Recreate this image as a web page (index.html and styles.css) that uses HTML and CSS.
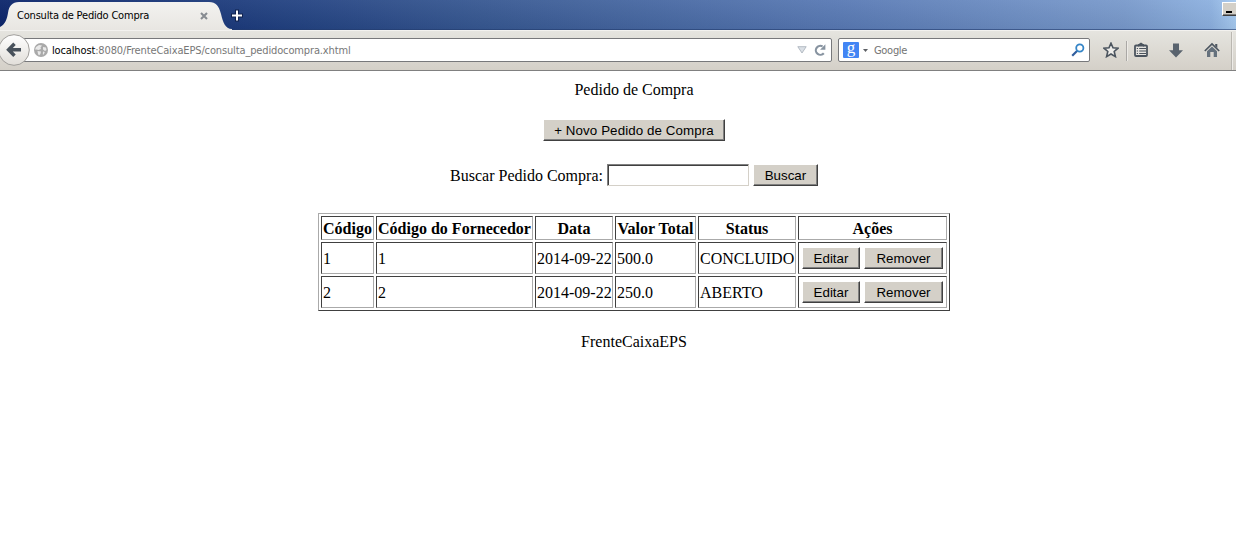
FILE: index.html
```html
<!DOCTYPE html>
<html lang="pt-BR">
<head>
<meta charset="utf-8">
<title>Consulta de Pedido Compra</title>
<link rel="stylesheet" href="styles.css">
</head>
<body>
<header class="browser">
  <div class="tabstrip">
    <div class="tab">
      <svg class="tab-shape" width="232" height="30" viewBox="0 0 232 30"><defs><linearGradient id="tabfill" x1="0" y1="0" x2="0" y2="1"><stop offset="0" stop-color="#f3f2f0"/><stop offset="1" stop-color="#e8e6e2"/></linearGradient></defs><path d="M0 30V27C6 24 7 18 8 13C9 6 12 2 19 2H209C216 2 219 6 221 14C223 22 225 29 232 29V30Z" fill="url(#tabfill)"/></svg>
      <span class="tab-title">Consulta de Pedido Compra</span>
      <svg class="tab-close" width="8" height="8" viewBox="0 0 8 8"><path d="M1 1L7 7M7 1L1 7" stroke="#878b91" stroke-width="2.1"/></svg>
    </div>
    <svg class="new-tab" width="13" height="13" viewBox="0 0 13 13"><path d="M6 .5V12.5M0 6.5H12" stroke="#10224f" stroke-width="4"/><path d="M6 1.5V11.5M1 6.5H11" stroke="#fff" stroke-width="2"/></svg>
    <div class="minimize"></div>
  </div>
  <div class="toolbar">
    <div class="field url">
      <svg class="globe" width="14" height="14" viewBox="0 0 14 14"><circle cx="7" cy="7" r="7" fill="#a9a9a9"/><path d="M2 4L5 2L8 2.5L6.5 4.5L7 6L4.5 7L2.5 6.5L1 6.5ZM9 4L12 4.5L12.5 7L11 8L9 6.5ZM3.5 8L7 8.6L6.4 11L5 12.4L4 11ZM9 8.5L10.8 9L9.8 11.5L8.8 11.5Z" fill="#e9e9e9"/></svg>
      <span class="address"><b>localhost</b>:8080/FrenteCaixaEPS/consulta_pedidocompra.xhtml</span>
      <svg class="drop" width="10" height="8" viewBox="0 0 10 8"><path d="M.8.7H9.2L5 7Z" fill="#dbe0e6" stroke="#aeb5be" stroke-width=".9"/></svg>
      <svg class="reload" width="12" height="12" viewBox="0 0 12 12"><path d="M9.8 9.2A4.5 4.5 0 1 1 8.6 2.4" fill="none" stroke="#8793a0" stroke-width="2.1"/><path d="M11.4.3V5.7H6.1Z" fill="#8793a0"/></svg>
    </div>
    <div class="field search">
      <span class="engine">g</span>
      <svg class="engine-arrow" width="5" height="3" viewBox="0 0 5 3"><path d="M0 0H5L2.5 3Z" fill="#5d6065"/></svg>
      <span class="placeholder">Google</span>
      <svg class="lens" width="14" height="14" viewBox="0 0 14 14"><path d="M6.2 7.8L1.2 12.8" stroke="#315d9d" stroke-width="2.2"/><circle cx="8.8" cy="5" r="3.6" fill="#fff" stroke="#3585c7" stroke-width="1.8"/></svg>
    </div>
    <svg class="back" width="32" height="32" viewBox="0 0 32 32"><defs><linearGradient id="backfill" x1="0" y1="0" x2="0" y2="1"><stop offset="0" stop-color="#fff"/><stop offset="1" stop-color="#e1ded9"/></linearGradient></defs><circle cx="14" cy="16" r="15.3" fill="url(#backfill)" stroke="#a09e9b"/><path d="M14.5 9.8L8.6 15.8L14.5 21.8M9.5 15.8H21" fill="none" stroke="#48515b" stroke-width="3.5"/></svg>
    <svg class="star" width="16" height="16" viewBox="0 0 16 16"><path d="M8 1.2L10 5.8L15 6.2L11.2 9.5L12.4 14.6L8 12L3.6 14.6L4.8 9.5L1 6.2L6 5.8Z" fill="#eeedea" stroke="#4b545e" stroke-width="1.6"/></svg>
    <i class="separator"></i>
    <svg class="clip" width="14" height="16" viewBox="0 0 14 16"><path d="M1 4.3Q1 3.5 2 3.5H4.3L7 1.5L9.7 3.5H12Q13 3.5 13 4.3V13Q13 14 12 14H2Q1 14 1 13Z" fill="#e5e3df" stroke="#4b545e" stroke-width="1.8"/><path d="M4 2.2H10V4.5H4Z" fill="#4b545e"/><path d="M2.8 6.5H4M5.2 6.5H12M2.8 9H4M5.2 9H12M2.8 11.5H4M5.2 11.5H12" stroke="#4b545e" stroke-width="1.1"/></svg>
    <svg class="download" width="14" height="15" viewBox="0 0 14 15"><path d="M4 .5H10V7.2H14L7 14.6L0 7.2H4Z" fill="#59636e"/></svg>
    <svg class="home" width="16" height="16" viewBox="0 0 16 16"><path d="M.8 9L8 2L15.2 9" fill="none" stroke="#4d5660" stroke-width="1.7"/><path d="M11.2 2H13.3V6L11.2 4Z" fill="#4d5660"/><path d="M3 9.2L8 4.4L13 9.2V15H9.7V10H6.3V15H3Z" fill="#65717d"/></svg>
    <i class="menu-divider"></i>
  </div>
</header>
<main class="page">
  <div class="heading">Pedido de Compra</div>
  <button class="button new">+ Novo Pedido de Compra</button>
  <form class="search-form" onsubmit="return false"><label for="query">Buscar Pedido Compra:</label><input class="query" id="query" type="text"><button class="button find">Buscar</button></form>
  <table class="orders">
    <colgroup><col class="code"><col class="supplier"><col class="date"><col class="total"><col class="status"><col class="actions"></colgroup>
    <tr><th>Código</th><th>Código do Fornecedor</th><th>Data</th><th>Valor Total</th><th>Status</th><th>Ações</th></tr>
    <tr><td>1</td><td>1</td><td>2014-09-22</td><td>500.0</td><td>CONCLUIDO</td><td class="action-cell"><div class="row-actions"><button class="button edit">Editar</button><button class="button remove">Remover</button></div></td></tr>
    <tr><td>2</td><td>2</td><td>2014-09-22</td><td>250.0</td><td>ABERTO</td><td class="action-cell"><div class="row-actions"><button class="button edit">Editar</button><button class="button remove">Remover</button></div></td></tr>
  </table>
  <footer class="footer">FrenteCaixaEPS</footer>
</main>
</body>
</html>
```
FILE: styles.css
```css
* { box-sizing: border-box; }
body { margin: 0; height: 558px; overflow: hidden; background: #fff; color: #000; font: 16px/18px "Liberation Serif", serif; }
svg { display: block; flex: none; }

.browser { font: 11px/14px "DejaVu Sans Condensed", "DejaVu Sans", sans-serif; }
.tabstrip { display: flex; height: 30px; overflow: hidden; box-shadow: inset 0 -1px rgba(35, 60, 110, .6); background: linear-gradient(rgba(255,255,255,.06), rgba(0,0,0,.05)), linear-gradient(90deg, #0a246a, #1d3c7d 20%, #365791 39%, #5879b4 68%, #7899cb 91%, #8cb0df 98%, #a6caf0); }
.tab { position: relative; display: flex; width: 230px; padding: 9px 0 0 17px; }
.tab-shape { position: absolute; left: 0; top: 0; }
.tab-title { position: relative; width: 183px; white-space: nowrap; letter-spacing: -.2px; }
.tab-close { position: relative; margin-top: 3px; }
.new-tab { margin-top: 9px; margin-left: 1px; }
.minimize { width: 24px; height: 14px; margin: 2px -10px 0 auto; border: 1px solid; border-color: #fff #404040 #404040 #fff; background: linear-gradient(#000,#000) 3px 8px / 6px 2px no-repeat #d4d0c8; box-shadow: inset 0 -1px #808080; }

.toolbar { position: relative; display: flex; align-items: center; height: 41px; padding-left: 20px; border-top: 1px solid #f3f2ef; border-bottom: 1px solid #808080; background: linear-gradient(#e5e4df, #d4d0c8); }
.field { display: flex; align-items: center; height: 24px; margin-top: -1px; border: 1px solid #77787b; border-radius: 2px; background: #fff; }
.url { width: 812px; padding-left: 13px; }
.address { flex: 1; padding-top: 2px; margin-left: 4px; color: #777; white-space: nowrap; letter-spacing: -.14px; }
.address b { color: #000; font-weight: normal; }
.reload { margin: 0 5px 0 7px; }
.search { width: 252px; margin-left: 6px; padding-left: 4px; }
.engine { width: 16px; height: 16px; border-radius: 1px; background: #4285f4; color: #fff; font: 17px/11px "Liberation Serif", serif; text-align: center; }
.engine-arrow { margin: 0 6px 0 4px; }
.placeholder { flex: 1; padding-top: 2px; color: #737373; letter-spacing: -.3px; }
.lens { margin-right: 4px; }
.back { position: absolute; left: 0; top: 3px; }
.star { margin-left: 13px; margin-top: -1px; }
.separator { width: 2px; height: 20px; margin-left: 7px; border-left: 1px solid #aaa8a5; border-right: 1px solid #edebe7; }
.clip { margin-left: 6px; margin-top: -1px; }
.download { margin-left: 21px; margin-top: -1px; }
.home { margin-left: 21px; margin-top: -1px; }
.menu-divider { width: 2px; height: 38px; margin-left: 11px; border-left: 1px solid #bab7b1; border-right: 1px solid #eeece8; }

.page { display: flex; flex-direction: column; align-items: center; width: 1268px; padding-top: 10px; }
.heading { height: 38px; }
.button { height: 22px; padding: 1px 0 0; border: 1px solid; border-color: #fff #404040 #404040 #fff; border-radius: 0; background: #d4d0c8; box-shadow: inset -1px -1px #808080; color: #000; font: 13.333px/19px "Liberation Sans", Arial, sans-serif; white-space: nowrap; }
.new { width: 182px; letter-spacing: .1px; }
.search-form { display: flex; align-items: center; height: 22px; margin-top: 23px; }
.search-form label { padding-top: 2px; }
.query { width: 142px; height: 22px; margin: 0 4px; padding: 1px; border: 1px solid; border-color: #808080 #d4d0c8 #d4d0c8 #808080; outline: 0; box-shadow: inset 1px 1px #404040; }
.find { width: 65px; }
.orders { width: 632px; margin-top: 27px; table-layout: fixed; border: 1px solid; border-color: #aaa #404040 #404040 #aaa; border-spacing: 2px; }
.orders th, .orders td { height: 32px; padding: 3px 1px 1px; border: 1px solid; border-color: #404040 #aaa #aaa #404040; text-align: left; white-space: nowrap; }
.orders th { height: 24px; padding: 2px 0 0; text-align: center; }
.orders .action-cell { padding: 1px; }
.code { width: 53px; }
.supplier { width: 157px; }
.date { width: 78px; }
.total { width: 81px; }
.status { width: 98px; }
.actions { width: 149px; }
.row-actions { display: flex; gap: 4px; padding-left: 2px; }
.edit { width: 58px; }
.remove { width: 79px; }
.footer { margin-top: 22px; }
```
